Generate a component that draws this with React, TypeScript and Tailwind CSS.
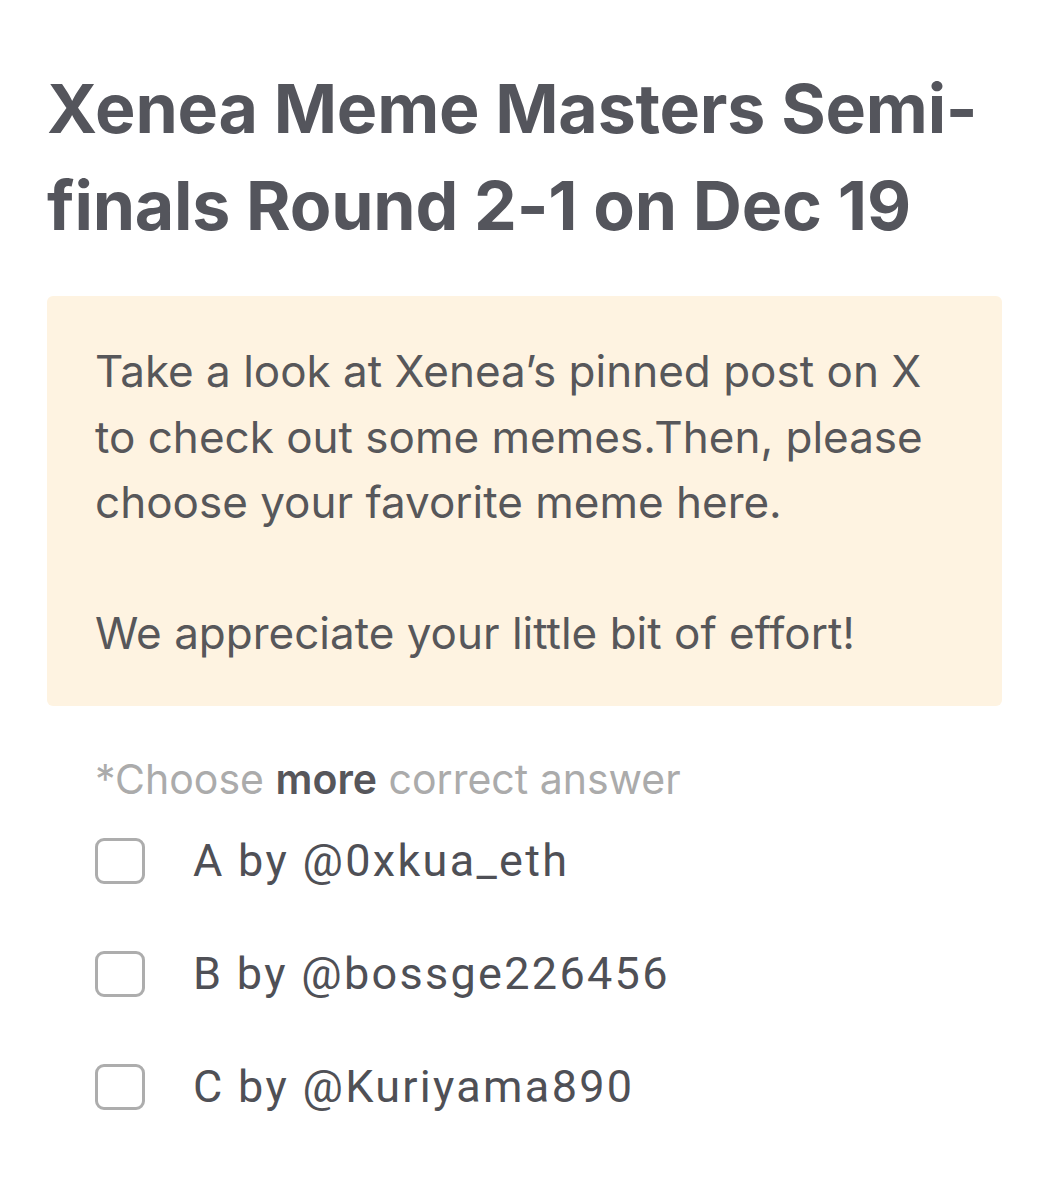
import React from 'react'

const options = ['A by @0xkua_eth', 'B by @bossge226456', 'C by @Kuriyama890']

export default function App() {
  return (
    <div className="min-h-[1200px] w-[1049px] bg-white px-[47px] pt-[60px]">
      <h1 className="font-['Inter',sans-serif] text-[68px] font-bold leading-[97px] tracking-[-0.2px] text-[#54555c]">
        Xenea Meme Masters Semi-
        <br />
        finals Round 2-1 on Dec 19
      </h1>

      <div className="mt-[42px] rounded-md bg-[#fef3e1] pl-12 pr-6 pt-[43px] pb-[39px] font-['Inter',sans-serif] text-[44px] leading-[65.5px] text-[#57575a]">
        <p>
          Take a look at Xenea’s pinned post on X
          <br />
          to check out some memes.Then, please
          <br />
          choose your favorite meme here.
        </p>
        <p className="mt-[65.5px]">We appreciate your little bit of effort!</p>
      </div>

      <div className="px-12 pt-[49px]">
        <p className="font-['Inter',sans-serif] text-[41px] leading-[48px] text-[#ababab]">
          *Choose <span className="font-semibold text-[#56565b]">more</span> correct answer
        </p>
        <ul className="mt-[35px] flex flex-col gap-[67px]">
          {options.map((o) => (
            <li key={o} className="flex items-center">
              <span className="h-[46px] w-[50px] shrink-0 rounded-[9px] border-[3px] border-[#adadad]" />
              <span className="ml-[48px] font-['Roboto',sans-serif] text-[45px] leading-[46px] tracking-[2.3px] text-[#4f5056]">{o}</span>
            </li>
          ))}
        </ul>
      </div>
    </div>
  )
}
